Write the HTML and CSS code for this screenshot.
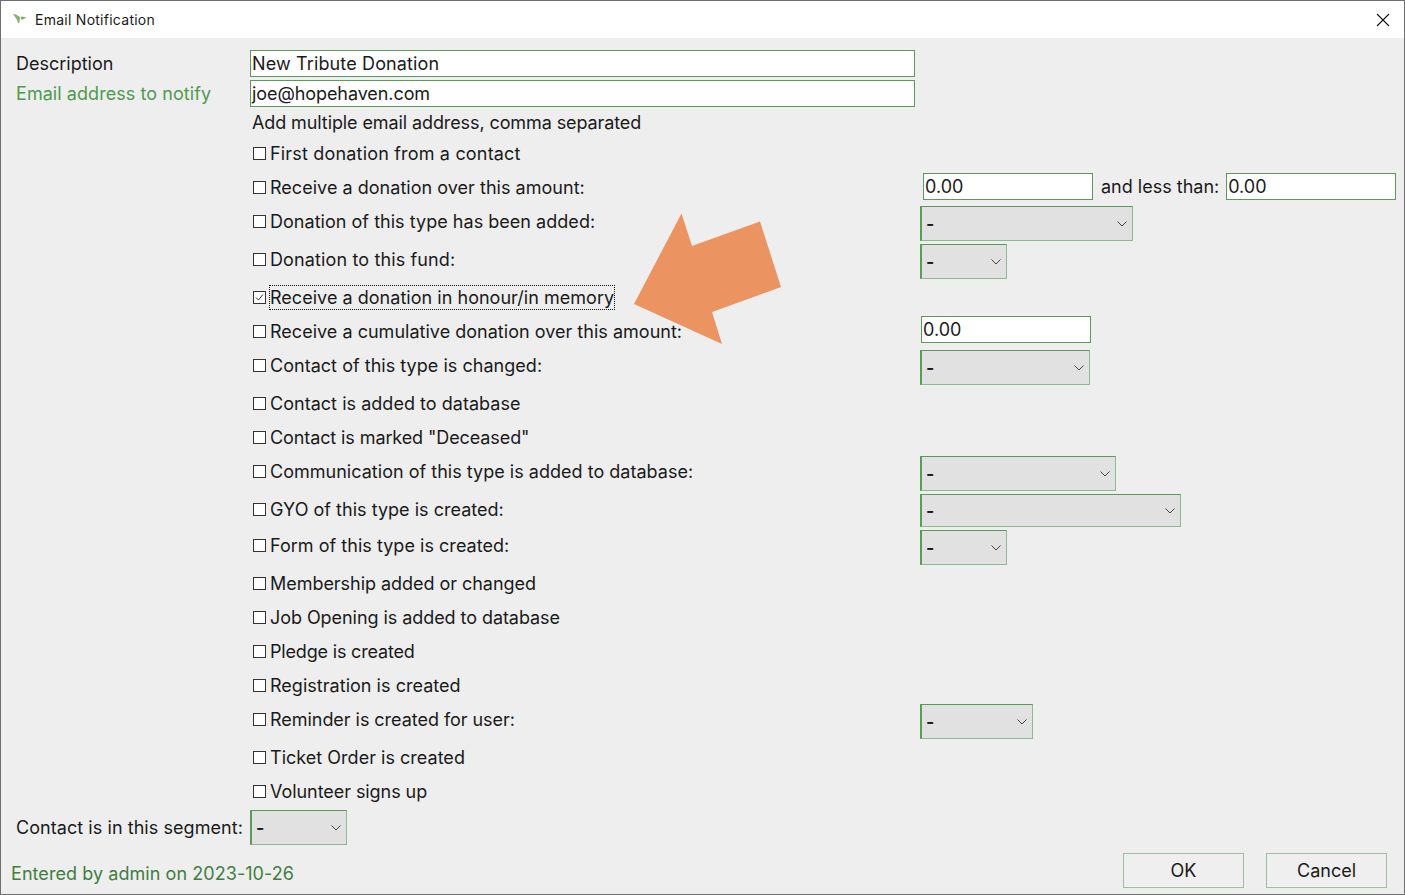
FILE: index.html
```html
<!DOCTYPE html>
<html lang="en">
<head>
<meta charset="utf-8">
<title>Email Notification</title>
<link rel="stylesheet" href="styles.css">
</head>
<body>
<div class="window">
  <header class="titlebar">
    <svg class="logo" width="14" height="10" viewBox="0 0 14 10"><path d="M0 0 L3 .5 L7 3 L6.5 8.5 L5.5 9.5 L3.5 5 Z" fill="#86b06f"/><path d="M8 2.5 L13.5 3.5 L8.5 6 Z" fill="#7aa765"/></svg>
    <span class="title">Email Notification</span>
    <svg class="close" width="14" height="14" viewBox="0 0 14 14"><path d="M1 1 L13 13 M13 1 L1 13" stroke="#111" stroke-width="1.1" fill="none"/></svg>
  </header>
  <main class="body">
    <div class="top-row first"><div class="top-label">Description</div><div class="field wide ls-c">New Tribute Donation</div></div>
    <div class="top-row"><div class="top-label green ls-b">Email address to notify</div><div class="field wide ls-n">joe@hopehaven.com</div></div>
    <div class="hint ls-m">Add multiple email address, comma separated</div>

    <div class="row"><label class="check"><span class="box"></span><span class="ls-e">First donation from a contact</span></label></div>
    <div class="row"><label class="check"><span class="box"></span><span class="ls-a">Receive a donation over this amount:</span></label>
      <div class="range"><div class="field w170">0.00</div><span class="and">and less than:</span><div class="field w170">0.00</div></div></div>
    <div class="row tall"><label class="check"><span class="box"></span><span class="ls-a">Donation of this type has been added:</span></label><div class="select w213"><span class="dash">-</span><svg class="chev" width="10" height="6" viewBox="0 0 10 6"><path d="M.5 .5 L5 5 L9.5 .5" fill="none" stroke="#444"/></svg></div></div>
    <div class="row tall"><label class="check"><span class="box"></span><span class="ls-c">Donation to this fund:</span></label><div class="select w87"><span class="dash">-</span><svg class="chev" width="10" height="6" viewBox="0 0 10 6"><path d="M.5 .5 L5 5 L9.5 .5" fill="none" stroke="#444"/></svg></div></div>
    <div class="row"><label class="check"><span class="box"><svg class="tick" width="11" height="11" viewBox="0 0 11 11"><path d="M2 5.5 L4.5 8 L9 2.5" fill="none" stroke="#333"/></svg></span><span class="focus ls-a">Receive a donation in honour/in memory</span></label></div>
    <div class="row"><label class="check"><span class="box"></span><span class="ls-t">Receive a cumulative donation over this amount:</span></label><div class="field w170 offset">0.00</div></div>
    <div class="row tall"><label class="check"><span class="box"></span><span class="ls-a">Contact of this type is changed:</span></label><div class="select w170"><span class="dash">-</span><svg class="chev" width="10" height="6" viewBox="0 0 10 6"><path d="M.5 .5 L5 5 L9.5 .5" fill="none" stroke="#444"/></svg></div></div>
    <div class="row"><label class="check"><span class="box"></span><span class="ls-a">Contact is added to database</span></label></div>
    <div class="row"><label class="check"><span class="box"></span><span class="ls-m">Contact is marked "Deceased"</span></label></div>
    <div class="row tall"><label class="check"><span class="box"></span><span class="ls-t">Communication of this type is added to database:</span></label><div class="select w196"><span class="dash">-</span><svg class="chev" width="10" height="6" viewBox="0 0 10 6"><path d="M.5 .5 L5 5 L9.5 .5" fill="none" stroke="#444"/></svg></div></div>
    <div class="row mid"><label class="check"><span class="box"></span><span class="ls-t">GYO of this type is created:</span></label><div class="select w261 short"><span class="dash">-</span><svg class="chev" width="10" height="6" viewBox="0 0 10 6"><path d="M.5 .5 L5 5 L9.5 .5" fill="none" stroke="#444"/></svg></div></div>
    <div class="row tall"><label class="check"><span class="box"></span><span class="ls-a">Form of this type is created:</span></label><div class="select w87"><span class="dash">-</span><svg class="chev" width="10" height="6" viewBox="0 0 10 6"><path d="M.5 .5 L5 5 L9.5 .5" fill="none" stroke="#444"/></svg></div></div>
    <div class="row"><label class="check"><span class="box"></span><span class="ls-s">Membership added or changed</span></label></div>
    <div class="row"><label class="check"><span class="box"></span><span class="ls-z">Job Opening is added to database</span></label></div>
    <div class="row"><label class="check"><span class="box"></span><span class="ls-x">Pledge is created</span></label></div>
    <div class="row"><label class="check"><span class="box"></span><span class="ls-a">Registration is created</span></label></div>
    <div class="row tall"><label class="check"><span class="box"></span><span class="ls-s">Reminder is created for user:</span></label><div class="select w113"><span class="dash">-</span><svg class="chev" width="10" height="6" viewBox="0 0 10 6"><path d="M.5 .5 L5 5 L9.5 .5" fill="none" stroke="#444"/></svg></div></div>
    <div class="row"><label class="check"><span class="box"></span><span class="ls-t">Ticket Order is created</span></label></div>
    <div class="row"><label class="check"><span class="box"></span><span class="ls-z">Volunteer signs up</span></label></div>

    <div class="segment"><span class="segment-label ls-b">Contact is in this segment:</span><div class="select w97"><span class="dash">-</span><svg class="chev" width="10" height="6" viewBox="0 0 10 6"><path d="M.5 .5 L5 5 L9.5 .5" fill="none" stroke="#444"/></svg></div></div>
    <footer class="footer">
      <span class="entered ls-b">Entered by admin on 2023-10-26</span>
      <div class="buttons"><button class="btn">OK</button><button class="btn">Cancel</button></div>
    </footer>
  </main>
  <svg class="arrow" width="148" height="132" viewBox="0 0 148 132"><polygon points="47.5,0.5 58,33 126,8.5 147,74 78,99 88,131 0,91" fill="#eb9361"/></svg>
</div>
</body>
</html>
```

FILE: styles.css
```css
* { box-sizing: border-box; }
html, body { margin: 0; padding: 0; }
body {
  width: 1405px;
  height: 895px;
  overflow: hidden;
  font-family: Inter, "Liberation Sans", sans-serif;
  font-size: 18px;
  color: #1a1a1a;
}
.window {
  position: relative;
  width: 1405px;
  height: 895px;
  border: 1px solid #6f6f6f;
  background: #eeeeee;
  display: flex;
  flex-direction: column;
}
.titlebar {
  flex: none;
  height: 37px;
  background: #fff;
  display: flex;
  align-items: center;
  padding: 0 14px 0 12px;
}
.logo { margin: -2px 8px 0 0; }
.title { font-size: 14px; letter-spacing: 0.26px; }
.close { margin-left: auto; }
.body { flex: 1; display: flex; flex-direction: column; }

/* The reference text is hinted, so line widths differ slightly from the font's natural metrics. */
.ls-n { letter-spacing: -0.08px; }
.ls-m { letter-spacing: -0.1px; }
.ls-x { letter-spacing: -0.18px; }
.ls-z { letter-spacing: -0.06px; }
.ls-s { letter-spacing: -0.04px; }
.ls-t { letter-spacing: 0.02px; }
.ls-a { letter-spacing: 0.03px; }
.ls-b { letter-spacing: 0.06px; }
.ls-c { letter-spacing: 0.13px; }
.ls-e { letter-spacing: 0.18px; }

.top-row { display: flex; height: 30px; padding-left: 15px; align-items: flex-start; }
.top-row.first { margin-top: 12px; }
.top-label { width: 234px; line-height: 27px; }
.green { color: #4f9a4f; }
.field {
  height: 27px;
  line-height: 25px;
  padding-left: 1px;
  background: #fff;
  border: 1px solid #5c9a5c;
  white-space: nowrap;
}
.wide { width: 665px; }
.hint { height: 26px; padding-left: 251px; line-height: 26px; }

.row { display: flex; height: 34px; padding-left: 252px; align-items: flex-start; }
.row.tall { height: 38px; }
.row.mid { height: 36px; }
.check { width: 667px; flex: none; height: 34px; display: flex; align-items: center; }
.box {
  flex: none;
  width: 13px;
  height: 13px;
  margin-right: 4px;
  border: 1px solid #333;
  background: #fff;
  display: flex;
  align-items: center;
  justify-content: center;
}
.tick { display: block; }
.focus { outline: 1px dotted #111; line-height: 23px; }

.range { display: flex; margin: 3px 0 0 3px; }
.and { margin: 0 7px 0 8px; line-height: 27px; }
.offset { margin: 2px 0 0 1px; }

.select {
  position: relative;
  height: 35px;
  margin-top: 2px;
  flex: none;
  display: flex;
  align-items: center;
  justify-content: space-between;
  padding: 0 5px 0 4px;
  background: #e1e1e1;
  border: 1px solid #8fb98f;
  border-left: 2px solid #5c9a5c;
  border-top-color: #5c9a5c;
}
.dash { font-weight: 600; }
.short { height: 33px; }
.chev { flex: none; }
.w87 { width: 87px; }
.w97 { width: 97px; }
.w113 { width: 113px; }
.w170 { width: 170px; }
.w196 { width: 196px; }
.w213 { width: 213px; }
.w261 { width: 261px; }

.segment { display: flex; align-items: flex-start; height: 42px; padding-left: 15px; }
.segment-label { width: 234px; line-height: 40px; }

.footer { display: flex; justify-content: space-between; align-items: flex-start; padding: 0 17px 0 10px; }
.entered { color: #3f7f3f; line-height: 48px; }
.buttons { display: flex; gap: 22px; }
.btn {
  width: 121px;
  height: 35px;
  margin-top: 3px;
  font: inherit;
  color: inherit;
  background: #efefef;
  border: 1px solid #9cc09c;
  padding: 0;
}

.arrow { position: absolute; left: 633px; top: 212px; }
```
